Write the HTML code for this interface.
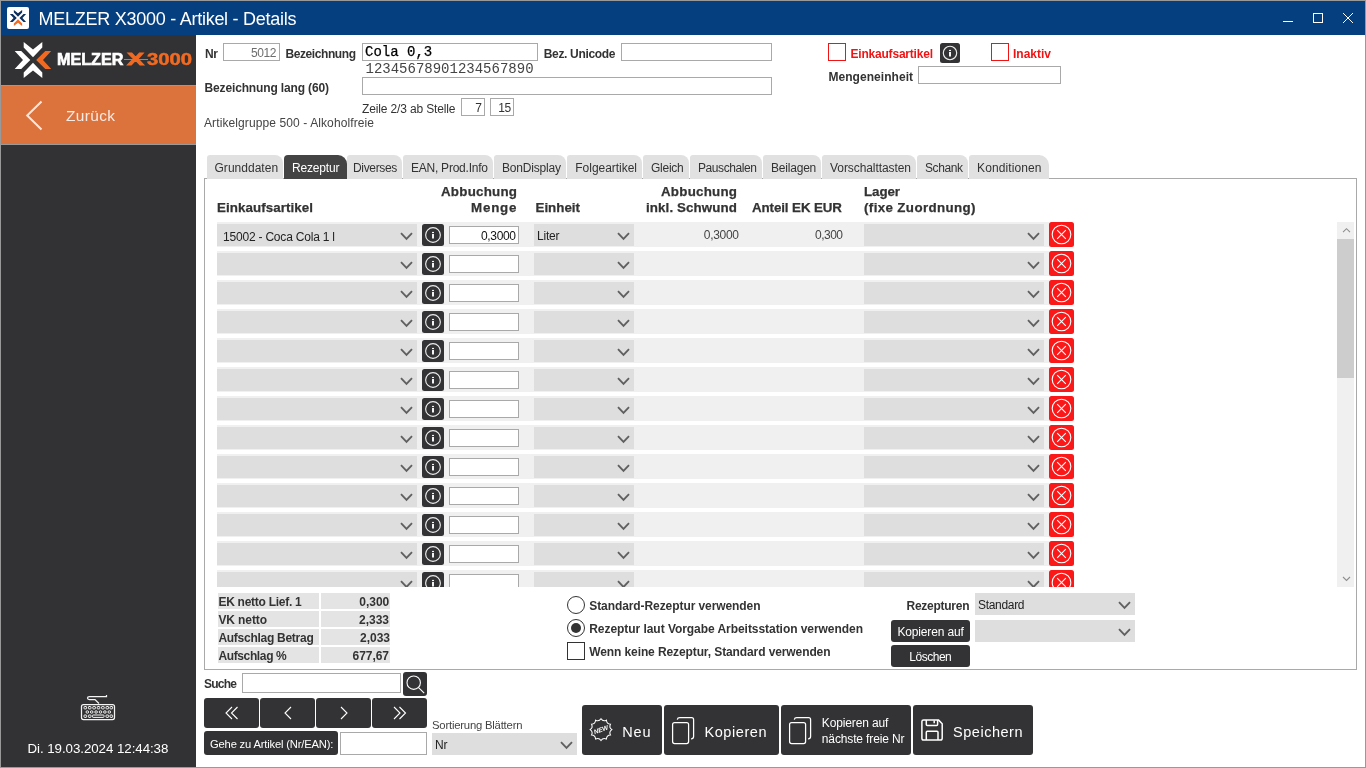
<!DOCTYPE html>
<html lang="de"><head><meta charset="utf-8"><title>MELZER X3000 - Artikel - Details</title>
<style>
html,body{margin:0;padding:0}
body{width:1366px;height:768px;position:relative;overflow:hidden;background:#fff;font-family:"Liberation Sans",sans-serif;}
#w{position:absolute;left:0;top:0;width:1366px;height:768px;box-sizing:border-box;border:1px solid #999;overflow:hidden}
#c{position:absolute;left:-1px;top:-1px;width:1366px;height:768px;will-change:transform}
#c div,#c svg,#c span{position:absolute}
.t{white-space:pre;line-height:20px;height:20px}
.titlebar{left:1px;top:1px;width:1364px;height:34px;background:#053f7f}
.sidebar{left:1px;top:35px;width:195px;height:732px;background:#323234}
svg{overflow:visible}
</style></head>
<body><div id="w"><div id="c">
<div class="titlebar"></div>
<svg class="abs" style="left:7px;top:7px" width="22" height="22" viewBox="0 0 22 22"><rect x="0" y="0" width="22" height="22" rx="2" fill="#fff"/>
<g transform="translate(11 11) scale(0.445) translate(-33 -60)"><g fill="#0b2f5e">
<polygon points="23.7,41.9 33,49.5 42.3,41.9 42.3,47.5 33,57.2 23.7,47.5"/>
<polygon points="14.7,51 21.2,51 30.3,60 21.2,68.9 14.7,68.9 23,60"/>
<polygon points="51.2,51 45.3,51 36.2,60 45.3,68.9 51.2,68.9 43,60"/></g>
<polygon points="23.7,78.1 33,70.4 42.3,78.1 42.3,72.6 33,62.7 23.7,72.6" fill="#f26a21"/></g></svg>
<span class="t" style="top:8.76px;font-size:18px;color:#fff;letter-spacing:-0.264px;left:38.60px;">MELZER X3000 - Artikel - Details</span>
<svg class="abs" style="left:1270px;top:1px" width="95" height="34" viewBox="0 0 95 34"><g stroke="#fff" stroke-width="1" fill="none">
<path d="M13 20.5 H23"/><rect x="43.5" y="12.5" width="9" height="9"/><path d="M73 12 L83 22 M83 12 L73 22"/></g></svg>
<div class="sidebar"></div>
<svg class="abs" style="left:0px;top:0px" width="60" height="90" viewBox="0 0 60 90">
<g fill="#fff">
<polygon points="23.7,41.9 33,49.5 42.3,41.9 42.3,47.5 33,57.2 23.7,47.5"/>
<polygon points="23.7,78.1 33,70.4 42.3,78.1 42.3,72.6 33,62.7 23.7,72.6"/>
<polygon points="14.7,51 21.2,51 30.3,60 21.2,68.9 14.7,68.9 23,60"/>
</g>
<polygon points="51.2,51 45.3,51 36.2,60 45.3,68.9 51.2,68.9 43,60" fill="#f26a21"/>
</svg>
<span class="t" style="left:57.00px;top:47.21px;font-size:17.3px;line-height:24px;height:24px;color:#fff;font-weight:bold;transform-origin:0 50%;transform:scaleX(0.9337);-webkit-text-stroke:0.7px #fff;">MELZER</span>
<span class="t" style="left:127.30px;top:47.71px;font-size:17px;line-height:24px;height:24px;color:#f26a21;font-weight:bold;transform-origin:0 50%;transform:scaleX(1.5169);-webkit-text-stroke:0.8px #f26a21;">X</span>
<span class="t" style="left:146.60px;top:47.68px;font-size:16.8px;line-height:24px;height:24px;color:#f26a21;font-weight:bold;transform-origin:0 50%;transform:scaleX(1.2094);-webkit-text-stroke:0.5px #f26a21;">3000</span>
<div class="abs" style="left:124px;top:59px;width:23.5px;height:1px;background:#f26a21;"></div>
<div class="abs" style="left:1px;top:85px;width:195px;height:60px;background:#dc733d;border-top:1px solid #9a9a9a;border-bottom:1px solid #9a9a9a;box-sizing:border-box;"></div>
<svg class="abs" style="left:24px;top:99px" width="22" height="34" viewBox="0 0 22 34"><path d="M17.5 2.5 L3.2 16.5 L17.5 30.5" fill="none" stroke="#f8e8df" stroke-width="2"/></svg>
<span class="t" style="top:105.86px;font-size:15.4px;color:#f8ebe4;letter-spacing:0.387px;left:66.00px;">Zurück</span>
<svg class="abs" style="left:80px;top:694px" width="36" height="27" viewBox="0 0 36 27"><g fill="none" stroke="#f4f4f4" stroke-width="1.25">
<rect x="1.5" y="10.5" width="33" height="15" rx="2"/>
<path d="M26.5 1 V2.5 H9.5 Q7.5 2.5 7.5 4 Q7.5 5.5 9.5 5.5 H15 L19 9.5"/>
<g stroke-width="1">
<rect x="4" y="12.5" width="2.6" height="2.4" rx="0.6"/><rect x="8.4" y="12.5" width="2.6" height="2.4" rx="0.6"/><rect x="12.8" y="12.5" width="2.6" height="2.4" rx="0.6"/><rect x="17.2" y="12.5" width="2.6" height="2.4" rx="0.6"/><rect x="21.6" y="12.5" width="2.6" height="2.4" rx="0.6"/><rect x="26" y="12.5" width="2.6" height="2.4" rx="0.6"/><rect x="30" y="12.5" width="2.6" height="2.4" rx="0.6"/>
<rect x="6" y="16.8" width="2.6" height="2.4" rx="1.2"/><rect x="10.4" y="16.8" width="2.6" height="2.4" rx="1.2"/><rect x="14.8" y="16.8" width="2.6" height="2.4" rx="1.2"/><rect x="19.2" y="16.8" width="2.6" height="2.4" rx="1.2"/><rect x="23.6" y="16.8" width="2.6" height="2.4" rx="1.2"/><rect x="28" y="16.8" width="2.6" height="2.4" rx="1.2"/>
<rect x="4" y="21" width="2.6" height="2.4" rx="0.6"/><rect x="8.4" y="21" width="2.6" height="2.4" rx="0.6"/><rect x="12.5" y="21" width="11.5" height="2.4" rx="0.6"/><rect x="26" y="21" width="2.6" height="2.4" rx="0.6"/><rect x="30" y="21" width="2.6" height="2.4" rx="0.6"/>
</g></g></svg>
<span class="t" style="top:738.88px;font-size:13.33px;color:#fff;letter-spacing:-0.064px;left:27.50px;">Di. 19.03.2024 12:44:38</span>
<span class="t" style="top:44.34px;font-size:12px;color:#333;letter-spacing:-0.336px;font-weight:bold;left:205.00px;">Nr</span>
<div class="abs" style="left:223px;top:43px;width:57px;height:18px;background:#fff;border:1px solid #a9a9a9;box-sizing:border-box;"></div>
<span class="t" style="top:42.84px;font-size:12px;color:#6d6d6d;letter-spacing:-0.398px;left:251.00px;">5012</span>
<span class="t" style="top:44.34px;font-size:12px;color:#333;letter-spacing:-0.417px;font-weight:bold;left:285.50px;">Bezeichnung</span>
<div class="abs" style="left:362px;top:43px;width:176px;height:18px;background:#fff;border:1px solid #a9a9a9;box-sizing:border-box;"></div>
<span class="t" style="top:42.35px;font-size:14px;color:#000;font-family:'Liberation Mono',monospace;left:365.00px;-webkit-text-stroke:0.25px #000;">Cola 0,3</span>
<span class="t" style="top:59.35px;font-size:14px;color:#444;font-family:'Liberation Mono',monospace;left:365.50px;">12345678901234567890</span>
<span class="t" style="top:44.34px;font-size:12px;color:#333;letter-spacing:-0.327px;font-weight:bold;left:543.75px;">Bez. Unicode</span>
<div class="abs" style="left:621px;top:43px;width:151px;height:18px;background:#fff;border:1px solid #a9a9a9;box-sizing:border-box;"></div>
<span class="t" style="top:77.84px;font-size:12px;color:#333;letter-spacing:-0.142px;font-weight:bold;left:204.50px;">Bezeichnung lang (60)</span>
<div class="abs" style="left:362px;top:77px;width:410px;height:18px;background:#fff;border:1px solid #a9a9a9;box-sizing:border-box;"></div>
<span class="t" style="top:99.14px;font-size:12px;color:#333;letter-spacing:-0.142px;left:362.00px;">Zeile 2/3 ab Stelle</span>
<div class="abs" style="left:461px;top:98px;width:24px;height:18px;background:#fff;border:1px solid #a9a9a9;box-sizing:border-box;"></div>
<span class="t" style="top:98.34px;font-size:12px;color:#333;left:475.20px;">7</span>
<div class="abs" style="left:490px;top:98px;width:24px;height:18px;background:#fff;border:1px solid #a9a9a9;box-sizing:border-box;"></div>
<span class="t" style="top:98.34px;font-size:12px;color:#333;letter-spacing:-0.348px;left:498.20px;">15</span>
<span class="t" style="top:112.84px;font-size:12px;color:#444;letter-spacing:0.104px;left:204.00px;">Artikelgruppe 500 - Alkoholfreie</span>
<div class="abs" style="left:828px;top:43px;width:18px;height:18px;background:#fff;border:1px solid #f01414;box-sizing:border-box;"></div>
<span class="t" style="top:43.84px;font-size:12px;color:#f01414;letter-spacing:-0.205px;font-weight:bold;left:850.50px;">Einkaufsartikel</span>
<svg class="abs" style="left:940px;top:43px" width="20" height="20" viewBox="0 0 20 20"><rect width="20" height="20" rx="2.5" fill="#333335"/><circle cx="10.0" cy="10.0" r="6.70" fill="none" stroke="#ededed" stroke-width="1.15"/><rect x="9.0" y="9.0" width="2" height="4.5" fill="#f4f4f4"/><rect x="9.0" y="6.9" width="2" height="1.2" fill="#f4f4f4"/></svg>
<div class="abs" style="left:991px;top:43px;width:18px;height:18px;background:#fff;border:1px solid #f01414;box-sizing:border-box;"></div>
<span class="t" style="top:43.84px;font-size:12px;color:#f01414;letter-spacing:-0.003px;font-weight:bold;left:1013.00px;">Inaktiv</span>
<span class="t" style="top:66.84px;font-size:12px;color:#333;letter-spacing:0.041px;font-weight:bold;left:828.50px;">Mengeneinheit</span>
<div class="abs" style="left:918px;top:66px;width:143px;height:18px;background:#fff;border:1px solid #a9a9a9;box-sizing:border-box;"></div>
<div class="abs" style="left:204px;top:178px;width:1153px;height:492px;border:1px solid #a9a9a9;box-sizing:border-box;background:#fff;"></div>
<div class="abs" style="left:207px;top:155px;width:76px;height:24px;background:#e1e1e1;border-radius:3px 8px 0 0;"></div>
<span class="t" style="top:157.54px;font-size:12px;color:#333;letter-spacing:0.024px;left:214.50px;">Grunddaten</span>
<div class="abs" style="left:347px;top:155px;width:54.80000000000001px;height:24px;background:#e1e1e1;border-radius:3px 8px 0 0;"></div>
<span class="t" style="top:157.54px;font-size:12px;color:#333;letter-spacing:-0.339px;left:353.00px;">Diverses</span>
<div class="abs" style="left:403px;top:155px;width:90px;height:24px;background:#e1e1e1;border-radius:3px 8px 0 0;"></div>
<span class="t" style="top:157.54px;font-size:12px;color:#333;letter-spacing:-0.226px;left:410.90px;">EAN, Prod.Info</span>
<div class="abs" style="left:494px;top:155px;width:71.79999999999995px;height:24px;background:#e1e1e1;border-radius:3px 8px 0 0;"></div>
<span class="t" style="top:157.54px;font-size:12px;color:#333;letter-spacing:-0.189px;left:502.00px;">BonDisplay</span>
<div class="abs" style="left:567px;top:155px;width:75px;height:24px;background:#e1e1e1;border-radius:3px 8px 0 0;"></div>
<span class="t" style="top:157.54px;font-size:12px;color:#333;letter-spacing:-0.030px;left:575.30px;">Folgeartikel</span>
<div class="abs" style="left:643px;top:155px;width:46px;height:24px;background:#e1e1e1;border-radius:3px 8px 0 0;"></div>
<span class="t" style="top:157.54px;font-size:12px;color:#333;letter-spacing:-0.243px;left:651.00px;">Gleich</span>
<div class="abs" style="left:690px;top:155px;width:71.79999999999995px;height:24px;background:#e1e1e1;border-radius:3px 8px 0 0;"></div>
<span class="t" style="top:157.54px;font-size:12px;color:#333;letter-spacing:-0.413px;left:698.00px;">Pauschalen</span>
<div class="abs" style="left:763px;top:155px;width:57.60000000000002px;height:24px;background:#e1e1e1;border-radius:3px 8px 0 0;"></div>
<span class="t" style="top:157.54px;font-size:12px;color:#333;letter-spacing:-0.201px;left:771.00px;">Beilagen</span>
<div class="abs" style="left:822px;top:155px;width:94px;height:24px;background:#e1e1e1;border-radius:3px 8px 0 0;"></div>
<span class="t" style="top:157.54px;font-size:12px;color:#333;letter-spacing:-0.089px;left:830.10px;">Vorschalttasten</span>
<div class="abs" style="left:917px;top:155px;width:50.700000000000045px;height:24px;background:#e1e1e1;border-radius:3px 8px 0 0;"></div>
<span class="t" style="top:157.54px;font-size:12px;color:#333;letter-spacing:-0.385px;left:925.00px;">Schank</span>
<div class="abs" style="left:969px;top:155px;width:79.79999999999995px;height:24px;background:#e1e1e1;border-radius:3px 10px 0 0;"></div>
<span class="t" style="top:157.54px;font-size:12px;color:#333;letter-spacing:0.091px;left:977.10px;">Konditionen</span>
<div class="abs" style="left:284px;top:155px;width:62.80000000000001px;height:24px;background:#444445;border-radius:4px 9px 0 0;"></div>
<span class="t" style="top:157.54px;font-size:12px;color:#fff;letter-spacing:-0.170px;left:292.00px;">Rezeptur</span>
<span class="t" style="top:197.68px;font-size:13.33px;color:#333;letter-spacing:0.083px;font-weight:bold;left:217.00px;-webkit-text-stroke:0.25px #333;">Einkaufsartikel</span>
<span class="t" style="top:181.58px;font-size:13.33px;color:#333;letter-spacing:0.245px;font-weight:bold;left:441.00px;-webkit-text-stroke:0.25px #333;">Abbuchung</span>
<span class="t" style="top:197.68px;font-size:13.33px;color:#333;letter-spacing:0.821px;font-weight:bold;left:471.00px;-webkit-text-stroke:0.25px #333;">Menge</span>
<span class="t" style="top:197.68px;font-size:13.33px;color:#333;letter-spacing:0.011px;font-weight:bold;left:535.50px;-webkit-text-stroke:0.25px #333;">Einheit</span>
<span class="t" style="top:181.58px;font-size:13.33px;color:#333;letter-spacing:0.245px;font-weight:bold;left:661.00px;-webkit-text-stroke:0.25px #333;">Abbuchung</span>
<span class="t" style="top:197.68px;font-size:13.33px;color:#333;letter-spacing:0.116px;font-weight:bold;left:646.00px;-webkit-text-stroke:0.25px #333;">inkl. Schwund</span>
<span class="t" style="top:197.68px;font-size:13.33px;color:#333;letter-spacing:-0.091px;font-weight:bold;left:752.00px;-webkit-text-stroke:0.25px #333;">Anteil EK EUR</span>
<span class="t" style="top:181.58px;font-size:13.33px;color:#333;letter-spacing:-0.075px;font-weight:bold;left:864.00px;-webkit-text-stroke:0.25px #333;">Lager</span>
<span class="t" style="top:197.68px;font-size:13.33px;color:#333;letter-spacing:0.375px;font-weight:bold;left:864.00px;-webkit-text-stroke:0.25px #333;">(fixe Zuordnung)</span>
<div class="abs" style="left:205px;top:222px;width:1132px;height:365px;overflow:hidden">
<div class="abs" style="left:12px;top:0px;width:832px;height:25px;background:#f0f0f0;"></div>
<div class="abs" style="left:12px;top:2px;width:200px;height:22px;background:#dedede;"></div>
<svg class="abs" style="left:195px;top:10px" width="13" height="9" viewBox="0 0 13 9"><path d="M1 1.2 L6.5 7 L12 1.2" fill="none" stroke="#606060" stroke-width="1.85"/></svg>
<svg class="abs" style="left:217px;top:2px" width="22" height="22" viewBox="0 0 22 22"><rect width="22" height="22" rx="2.5" fill="#333335"/><circle cx="11.0" cy="11.0" r="7.37" fill="none" stroke="#ededed" stroke-width="1.15"/><rect x="10.0" y="10.0" width="2" height="4.5" fill="#f4f4f4"/><rect x="10.0" y="7.9" width="2" height="1.2" fill="#f4f4f4"/></svg>
<div class="abs" style="left:244px;top:4px;width:70px;height:18px;background:#fff;border:1px solid #a9a9a9;box-sizing:border-box;"></div>
<div class="abs" style="left:329px;top:2px;width:100px;height:22px;background:#dedede;"></div>
<svg class="abs" style="left:412px;top:10px" width="13" height="9" viewBox="0 0 13 9"><path d="M1 1.2 L6.5 7 L12 1.2" fill="none" stroke="#606060" stroke-width="1.85"/></svg>
<div class="abs" style="left:659px;top:2px;width:180px;height:22px;background:#dedede;"></div>
<svg class="abs" style="left:822px;top:10px" width="13" height="9" viewBox="0 0 13 9"><path d="M1 1.2 L6.5 7 L12 1.2" fill="none" stroke="#606060" stroke-width="1.85"/></svg>
<svg class="abs" style="left:844px;top:0px" width="25" height="25" viewBox="0 0 25 25"><rect width="25" height="25" rx="2.5" fill="#fb1818"/><circle cx="12.5" cy="12.5" r="9.3" fill="none" stroke="#fff" stroke-width="1.1"/><path d="M8.2 8.2 L16.8 16.8 M16.8 8.2 L8.2 16.8" stroke="#fff" stroke-width="1.1"/></svg>
<div class="abs" style="left:12px;top:29px;width:832px;height:25px;background:#f0f0f0;"></div>
<div class="abs" style="left:12px;top:31px;width:200px;height:22px;background:#dedede;"></div>
<svg class="abs" style="left:195px;top:39px" width="13" height="9" viewBox="0 0 13 9"><path d="M1 1.2 L6.5 7 L12 1.2" fill="none" stroke="#606060" stroke-width="1.85"/></svg>
<svg class="abs" style="left:217px;top:31px" width="22" height="22" viewBox="0 0 22 22"><rect width="22" height="22" rx="2.5" fill="#333335"/><circle cx="11.0" cy="11.0" r="7.37" fill="none" stroke="#ededed" stroke-width="1.15"/><rect x="10.0" y="10.0" width="2" height="4.5" fill="#f4f4f4"/><rect x="10.0" y="7.9" width="2" height="1.2" fill="#f4f4f4"/></svg>
<div class="abs" style="left:244px;top:33px;width:70px;height:18px;background:#fff;border:1px solid #a9a9a9;box-sizing:border-box;"></div>
<div class="abs" style="left:329px;top:31px;width:100px;height:22px;background:#dedede;"></div>
<svg class="abs" style="left:412px;top:39px" width="13" height="9" viewBox="0 0 13 9"><path d="M1 1.2 L6.5 7 L12 1.2" fill="none" stroke="#606060" stroke-width="1.85"/></svg>
<div class="abs" style="left:659px;top:31px;width:180px;height:22px;background:#dedede;"></div>
<svg class="abs" style="left:822px;top:39px" width="13" height="9" viewBox="0 0 13 9"><path d="M1 1.2 L6.5 7 L12 1.2" fill="none" stroke="#606060" stroke-width="1.85"/></svg>
<svg class="abs" style="left:844px;top:29px" width="25" height="25" viewBox="0 0 25 25"><rect width="25" height="25" rx="2.5" fill="#fb1818"/><circle cx="12.5" cy="12.5" r="9.3" fill="none" stroke="#fff" stroke-width="1.1"/><path d="M8.2 8.2 L16.8 16.8 M16.8 8.2 L8.2 16.8" stroke="#fff" stroke-width="1.1"/></svg>
<div class="abs" style="left:12px;top:58px;width:832px;height:25px;background:#f0f0f0;"></div>
<div class="abs" style="left:12px;top:60px;width:200px;height:22px;background:#dedede;"></div>
<svg class="abs" style="left:195px;top:68px" width="13" height="9" viewBox="0 0 13 9"><path d="M1 1.2 L6.5 7 L12 1.2" fill="none" stroke="#606060" stroke-width="1.85"/></svg>
<svg class="abs" style="left:217px;top:60px" width="22" height="22" viewBox="0 0 22 22"><rect width="22" height="22" rx="2.5" fill="#333335"/><circle cx="11.0" cy="11.0" r="7.37" fill="none" stroke="#ededed" stroke-width="1.15"/><rect x="10.0" y="10.0" width="2" height="4.5" fill="#f4f4f4"/><rect x="10.0" y="7.9" width="2" height="1.2" fill="#f4f4f4"/></svg>
<div class="abs" style="left:244px;top:62px;width:70px;height:18px;background:#fff;border:1px solid #a9a9a9;box-sizing:border-box;"></div>
<div class="abs" style="left:329px;top:60px;width:100px;height:22px;background:#dedede;"></div>
<svg class="abs" style="left:412px;top:68px" width="13" height="9" viewBox="0 0 13 9"><path d="M1 1.2 L6.5 7 L12 1.2" fill="none" stroke="#606060" stroke-width="1.85"/></svg>
<div class="abs" style="left:659px;top:60px;width:180px;height:22px;background:#dedede;"></div>
<svg class="abs" style="left:822px;top:68px" width="13" height="9" viewBox="0 0 13 9"><path d="M1 1.2 L6.5 7 L12 1.2" fill="none" stroke="#606060" stroke-width="1.85"/></svg>
<svg class="abs" style="left:844px;top:58px" width="25" height="25" viewBox="0 0 25 25"><rect width="25" height="25" rx="2.5" fill="#fb1818"/><circle cx="12.5" cy="12.5" r="9.3" fill="none" stroke="#fff" stroke-width="1.1"/><path d="M8.2 8.2 L16.8 16.8 M16.8 8.2 L8.2 16.8" stroke="#fff" stroke-width="1.1"/></svg>
<div class="abs" style="left:12px;top:87px;width:832px;height:25px;background:#f0f0f0;"></div>
<div class="abs" style="left:12px;top:89px;width:200px;height:22px;background:#dedede;"></div>
<svg class="abs" style="left:195px;top:97px" width="13" height="9" viewBox="0 0 13 9"><path d="M1 1.2 L6.5 7 L12 1.2" fill="none" stroke="#606060" stroke-width="1.85"/></svg>
<svg class="abs" style="left:217px;top:89px" width="22" height="22" viewBox="0 0 22 22"><rect width="22" height="22" rx="2.5" fill="#333335"/><circle cx="11.0" cy="11.0" r="7.37" fill="none" stroke="#ededed" stroke-width="1.15"/><rect x="10.0" y="10.0" width="2" height="4.5" fill="#f4f4f4"/><rect x="10.0" y="7.9" width="2" height="1.2" fill="#f4f4f4"/></svg>
<div class="abs" style="left:244px;top:91px;width:70px;height:18px;background:#fff;border:1px solid #a9a9a9;box-sizing:border-box;"></div>
<div class="abs" style="left:329px;top:89px;width:100px;height:22px;background:#dedede;"></div>
<svg class="abs" style="left:412px;top:97px" width="13" height="9" viewBox="0 0 13 9"><path d="M1 1.2 L6.5 7 L12 1.2" fill="none" stroke="#606060" stroke-width="1.85"/></svg>
<div class="abs" style="left:659px;top:89px;width:180px;height:22px;background:#dedede;"></div>
<svg class="abs" style="left:822px;top:97px" width="13" height="9" viewBox="0 0 13 9"><path d="M1 1.2 L6.5 7 L12 1.2" fill="none" stroke="#606060" stroke-width="1.85"/></svg>
<svg class="abs" style="left:844px;top:87px" width="25" height="25" viewBox="0 0 25 25"><rect width="25" height="25" rx="2.5" fill="#fb1818"/><circle cx="12.5" cy="12.5" r="9.3" fill="none" stroke="#fff" stroke-width="1.1"/><path d="M8.2 8.2 L16.8 16.8 M16.8 8.2 L8.2 16.8" stroke="#fff" stroke-width="1.1"/></svg>
<div class="abs" style="left:12px;top:116px;width:832px;height:25px;background:#f0f0f0;"></div>
<div class="abs" style="left:12px;top:118px;width:200px;height:22px;background:#dedede;"></div>
<svg class="abs" style="left:195px;top:126px" width="13" height="9" viewBox="0 0 13 9"><path d="M1 1.2 L6.5 7 L12 1.2" fill="none" stroke="#606060" stroke-width="1.85"/></svg>
<svg class="abs" style="left:217px;top:118px" width="22" height="22" viewBox="0 0 22 22"><rect width="22" height="22" rx="2.5" fill="#333335"/><circle cx="11.0" cy="11.0" r="7.37" fill="none" stroke="#ededed" stroke-width="1.15"/><rect x="10.0" y="10.0" width="2" height="4.5" fill="#f4f4f4"/><rect x="10.0" y="7.9" width="2" height="1.2" fill="#f4f4f4"/></svg>
<div class="abs" style="left:244px;top:120px;width:70px;height:18px;background:#fff;border:1px solid #a9a9a9;box-sizing:border-box;"></div>
<div class="abs" style="left:329px;top:118px;width:100px;height:22px;background:#dedede;"></div>
<svg class="abs" style="left:412px;top:126px" width="13" height="9" viewBox="0 0 13 9"><path d="M1 1.2 L6.5 7 L12 1.2" fill="none" stroke="#606060" stroke-width="1.85"/></svg>
<div class="abs" style="left:659px;top:118px;width:180px;height:22px;background:#dedede;"></div>
<svg class="abs" style="left:822px;top:126px" width="13" height="9" viewBox="0 0 13 9"><path d="M1 1.2 L6.5 7 L12 1.2" fill="none" stroke="#606060" stroke-width="1.85"/></svg>
<svg class="abs" style="left:844px;top:116px" width="25" height="25" viewBox="0 0 25 25"><rect width="25" height="25" rx="2.5" fill="#fb1818"/><circle cx="12.5" cy="12.5" r="9.3" fill="none" stroke="#fff" stroke-width="1.1"/><path d="M8.2 8.2 L16.8 16.8 M16.8 8.2 L8.2 16.8" stroke="#fff" stroke-width="1.1"/></svg>
<div class="abs" style="left:12px;top:145px;width:832px;height:25px;background:#f0f0f0;"></div>
<div class="abs" style="left:12px;top:147px;width:200px;height:22px;background:#dedede;"></div>
<svg class="abs" style="left:195px;top:155px" width="13" height="9" viewBox="0 0 13 9"><path d="M1 1.2 L6.5 7 L12 1.2" fill="none" stroke="#606060" stroke-width="1.85"/></svg>
<svg class="abs" style="left:217px;top:147px" width="22" height="22" viewBox="0 0 22 22"><rect width="22" height="22" rx="2.5" fill="#333335"/><circle cx="11.0" cy="11.0" r="7.37" fill="none" stroke="#ededed" stroke-width="1.15"/><rect x="10.0" y="10.0" width="2" height="4.5" fill="#f4f4f4"/><rect x="10.0" y="7.9" width="2" height="1.2" fill="#f4f4f4"/></svg>
<div class="abs" style="left:244px;top:149px;width:70px;height:18px;background:#fff;border:1px solid #a9a9a9;box-sizing:border-box;"></div>
<div class="abs" style="left:329px;top:147px;width:100px;height:22px;background:#dedede;"></div>
<svg class="abs" style="left:412px;top:155px" width="13" height="9" viewBox="0 0 13 9"><path d="M1 1.2 L6.5 7 L12 1.2" fill="none" stroke="#606060" stroke-width="1.85"/></svg>
<div class="abs" style="left:659px;top:147px;width:180px;height:22px;background:#dedede;"></div>
<svg class="abs" style="left:822px;top:155px" width="13" height="9" viewBox="0 0 13 9"><path d="M1 1.2 L6.5 7 L12 1.2" fill="none" stroke="#606060" stroke-width="1.85"/></svg>
<svg class="abs" style="left:844px;top:145px" width="25" height="25" viewBox="0 0 25 25"><rect width="25" height="25" rx="2.5" fill="#fb1818"/><circle cx="12.5" cy="12.5" r="9.3" fill="none" stroke="#fff" stroke-width="1.1"/><path d="M8.2 8.2 L16.8 16.8 M16.8 8.2 L8.2 16.8" stroke="#fff" stroke-width="1.1"/></svg>
<div class="abs" style="left:12px;top:174px;width:832px;height:25px;background:#f0f0f0;"></div>
<div class="abs" style="left:12px;top:176px;width:200px;height:22px;background:#dedede;"></div>
<svg class="abs" style="left:195px;top:184px" width="13" height="9" viewBox="0 0 13 9"><path d="M1 1.2 L6.5 7 L12 1.2" fill="none" stroke="#606060" stroke-width="1.85"/></svg>
<svg class="abs" style="left:217px;top:176px" width="22" height="22" viewBox="0 0 22 22"><rect width="22" height="22" rx="2.5" fill="#333335"/><circle cx="11.0" cy="11.0" r="7.37" fill="none" stroke="#ededed" stroke-width="1.15"/><rect x="10.0" y="10.0" width="2" height="4.5" fill="#f4f4f4"/><rect x="10.0" y="7.9" width="2" height="1.2" fill="#f4f4f4"/></svg>
<div class="abs" style="left:244px;top:178px;width:70px;height:18px;background:#fff;border:1px solid #a9a9a9;box-sizing:border-box;"></div>
<div class="abs" style="left:329px;top:176px;width:100px;height:22px;background:#dedede;"></div>
<svg class="abs" style="left:412px;top:184px" width="13" height="9" viewBox="0 0 13 9"><path d="M1 1.2 L6.5 7 L12 1.2" fill="none" stroke="#606060" stroke-width="1.85"/></svg>
<div class="abs" style="left:659px;top:176px;width:180px;height:22px;background:#dedede;"></div>
<svg class="abs" style="left:822px;top:184px" width="13" height="9" viewBox="0 0 13 9"><path d="M1 1.2 L6.5 7 L12 1.2" fill="none" stroke="#606060" stroke-width="1.85"/></svg>
<svg class="abs" style="left:844px;top:174px" width="25" height="25" viewBox="0 0 25 25"><rect width="25" height="25" rx="2.5" fill="#fb1818"/><circle cx="12.5" cy="12.5" r="9.3" fill="none" stroke="#fff" stroke-width="1.1"/><path d="M8.2 8.2 L16.8 16.8 M16.8 8.2 L8.2 16.8" stroke="#fff" stroke-width="1.1"/></svg>
<div class="abs" style="left:12px;top:203px;width:832px;height:25px;background:#f0f0f0;"></div>
<div class="abs" style="left:12px;top:205px;width:200px;height:22px;background:#dedede;"></div>
<svg class="abs" style="left:195px;top:213px" width="13" height="9" viewBox="0 0 13 9"><path d="M1 1.2 L6.5 7 L12 1.2" fill="none" stroke="#606060" stroke-width="1.85"/></svg>
<svg class="abs" style="left:217px;top:205px" width="22" height="22" viewBox="0 0 22 22"><rect width="22" height="22" rx="2.5" fill="#333335"/><circle cx="11.0" cy="11.0" r="7.37" fill="none" stroke="#ededed" stroke-width="1.15"/><rect x="10.0" y="10.0" width="2" height="4.5" fill="#f4f4f4"/><rect x="10.0" y="7.9" width="2" height="1.2" fill="#f4f4f4"/></svg>
<div class="abs" style="left:244px;top:207px;width:70px;height:18px;background:#fff;border:1px solid #a9a9a9;box-sizing:border-box;"></div>
<div class="abs" style="left:329px;top:205px;width:100px;height:22px;background:#dedede;"></div>
<svg class="abs" style="left:412px;top:213px" width="13" height="9" viewBox="0 0 13 9"><path d="M1 1.2 L6.5 7 L12 1.2" fill="none" stroke="#606060" stroke-width="1.85"/></svg>
<div class="abs" style="left:659px;top:205px;width:180px;height:22px;background:#dedede;"></div>
<svg class="abs" style="left:822px;top:213px" width="13" height="9" viewBox="0 0 13 9"><path d="M1 1.2 L6.5 7 L12 1.2" fill="none" stroke="#606060" stroke-width="1.85"/></svg>
<svg class="abs" style="left:844px;top:203px" width="25" height="25" viewBox="0 0 25 25"><rect width="25" height="25" rx="2.5" fill="#fb1818"/><circle cx="12.5" cy="12.5" r="9.3" fill="none" stroke="#fff" stroke-width="1.1"/><path d="M8.2 8.2 L16.8 16.8 M16.8 8.2 L8.2 16.8" stroke="#fff" stroke-width="1.1"/></svg>
<div class="abs" style="left:12px;top:232px;width:832px;height:25px;background:#f0f0f0;"></div>
<div class="abs" style="left:12px;top:234px;width:200px;height:22px;background:#dedede;"></div>
<svg class="abs" style="left:195px;top:242px" width="13" height="9" viewBox="0 0 13 9"><path d="M1 1.2 L6.5 7 L12 1.2" fill="none" stroke="#606060" stroke-width="1.85"/></svg>
<svg class="abs" style="left:217px;top:234px" width="22" height="22" viewBox="0 0 22 22"><rect width="22" height="22" rx="2.5" fill="#333335"/><circle cx="11.0" cy="11.0" r="7.37" fill="none" stroke="#ededed" stroke-width="1.15"/><rect x="10.0" y="10.0" width="2" height="4.5" fill="#f4f4f4"/><rect x="10.0" y="7.9" width="2" height="1.2" fill="#f4f4f4"/></svg>
<div class="abs" style="left:244px;top:236px;width:70px;height:18px;background:#fff;border:1px solid #a9a9a9;box-sizing:border-box;"></div>
<div class="abs" style="left:329px;top:234px;width:100px;height:22px;background:#dedede;"></div>
<svg class="abs" style="left:412px;top:242px" width="13" height="9" viewBox="0 0 13 9"><path d="M1 1.2 L6.5 7 L12 1.2" fill="none" stroke="#606060" stroke-width="1.85"/></svg>
<div class="abs" style="left:659px;top:234px;width:180px;height:22px;background:#dedede;"></div>
<svg class="abs" style="left:822px;top:242px" width="13" height="9" viewBox="0 0 13 9"><path d="M1 1.2 L6.5 7 L12 1.2" fill="none" stroke="#606060" stroke-width="1.85"/></svg>
<svg class="abs" style="left:844px;top:232px" width="25" height="25" viewBox="0 0 25 25"><rect width="25" height="25" rx="2.5" fill="#fb1818"/><circle cx="12.5" cy="12.5" r="9.3" fill="none" stroke="#fff" stroke-width="1.1"/><path d="M8.2 8.2 L16.8 16.8 M16.8 8.2 L8.2 16.8" stroke="#fff" stroke-width="1.1"/></svg>
<div class="abs" style="left:12px;top:261px;width:832px;height:25px;background:#f0f0f0;"></div>
<div class="abs" style="left:12px;top:263px;width:200px;height:22px;background:#dedede;"></div>
<svg class="abs" style="left:195px;top:271px" width="13" height="9" viewBox="0 0 13 9"><path d="M1 1.2 L6.5 7 L12 1.2" fill="none" stroke="#606060" stroke-width="1.85"/></svg>
<svg class="abs" style="left:217px;top:263px" width="22" height="22" viewBox="0 0 22 22"><rect width="22" height="22" rx="2.5" fill="#333335"/><circle cx="11.0" cy="11.0" r="7.37" fill="none" stroke="#ededed" stroke-width="1.15"/><rect x="10.0" y="10.0" width="2" height="4.5" fill="#f4f4f4"/><rect x="10.0" y="7.9" width="2" height="1.2" fill="#f4f4f4"/></svg>
<div class="abs" style="left:244px;top:265px;width:70px;height:18px;background:#fff;border:1px solid #a9a9a9;box-sizing:border-box;"></div>
<div class="abs" style="left:329px;top:263px;width:100px;height:22px;background:#dedede;"></div>
<svg class="abs" style="left:412px;top:271px" width="13" height="9" viewBox="0 0 13 9"><path d="M1 1.2 L6.5 7 L12 1.2" fill="none" stroke="#606060" stroke-width="1.85"/></svg>
<div class="abs" style="left:659px;top:263px;width:180px;height:22px;background:#dedede;"></div>
<svg class="abs" style="left:822px;top:271px" width="13" height="9" viewBox="0 0 13 9"><path d="M1 1.2 L6.5 7 L12 1.2" fill="none" stroke="#606060" stroke-width="1.85"/></svg>
<svg class="abs" style="left:844px;top:261px" width="25" height="25" viewBox="0 0 25 25"><rect width="25" height="25" rx="2.5" fill="#fb1818"/><circle cx="12.5" cy="12.5" r="9.3" fill="none" stroke="#fff" stroke-width="1.1"/><path d="M8.2 8.2 L16.8 16.8 M16.8 8.2 L8.2 16.8" stroke="#fff" stroke-width="1.1"/></svg>
<div class="abs" style="left:12px;top:290px;width:832px;height:25px;background:#f0f0f0;"></div>
<div class="abs" style="left:12px;top:292px;width:200px;height:22px;background:#dedede;"></div>
<svg class="abs" style="left:195px;top:300px" width="13" height="9" viewBox="0 0 13 9"><path d="M1 1.2 L6.5 7 L12 1.2" fill="none" stroke="#606060" stroke-width="1.85"/></svg>
<svg class="abs" style="left:217px;top:292px" width="22" height="22" viewBox="0 0 22 22"><rect width="22" height="22" rx="2.5" fill="#333335"/><circle cx="11.0" cy="11.0" r="7.37" fill="none" stroke="#ededed" stroke-width="1.15"/><rect x="10.0" y="10.0" width="2" height="4.5" fill="#f4f4f4"/><rect x="10.0" y="7.9" width="2" height="1.2" fill="#f4f4f4"/></svg>
<div class="abs" style="left:244px;top:294px;width:70px;height:18px;background:#fff;border:1px solid #a9a9a9;box-sizing:border-box;"></div>
<div class="abs" style="left:329px;top:292px;width:100px;height:22px;background:#dedede;"></div>
<svg class="abs" style="left:412px;top:300px" width="13" height="9" viewBox="0 0 13 9"><path d="M1 1.2 L6.5 7 L12 1.2" fill="none" stroke="#606060" stroke-width="1.85"/></svg>
<div class="abs" style="left:659px;top:292px;width:180px;height:22px;background:#dedede;"></div>
<svg class="abs" style="left:822px;top:300px" width="13" height="9" viewBox="0 0 13 9"><path d="M1 1.2 L6.5 7 L12 1.2" fill="none" stroke="#606060" stroke-width="1.85"/></svg>
<svg class="abs" style="left:844px;top:290px" width="25" height="25" viewBox="0 0 25 25"><rect width="25" height="25" rx="2.5" fill="#fb1818"/><circle cx="12.5" cy="12.5" r="9.3" fill="none" stroke="#fff" stroke-width="1.1"/><path d="M8.2 8.2 L16.8 16.8 M16.8 8.2 L8.2 16.8" stroke="#fff" stroke-width="1.1"/></svg>
<div class="abs" style="left:12px;top:319px;width:832px;height:25px;background:#f0f0f0;"></div>
<div class="abs" style="left:12px;top:321px;width:200px;height:22px;background:#dedede;"></div>
<svg class="abs" style="left:195px;top:329px" width="13" height="9" viewBox="0 0 13 9"><path d="M1 1.2 L6.5 7 L12 1.2" fill="none" stroke="#606060" stroke-width="1.85"/></svg>
<svg class="abs" style="left:217px;top:321px" width="22" height="22" viewBox="0 0 22 22"><rect width="22" height="22" rx="2.5" fill="#333335"/><circle cx="11.0" cy="11.0" r="7.37" fill="none" stroke="#ededed" stroke-width="1.15"/><rect x="10.0" y="10.0" width="2" height="4.5" fill="#f4f4f4"/><rect x="10.0" y="7.9" width="2" height="1.2" fill="#f4f4f4"/></svg>
<div class="abs" style="left:244px;top:323px;width:70px;height:18px;background:#fff;border:1px solid #a9a9a9;box-sizing:border-box;"></div>
<div class="abs" style="left:329px;top:321px;width:100px;height:22px;background:#dedede;"></div>
<svg class="abs" style="left:412px;top:329px" width="13" height="9" viewBox="0 0 13 9"><path d="M1 1.2 L6.5 7 L12 1.2" fill="none" stroke="#606060" stroke-width="1.85"/></svg>
<div class="abs" style="left:659px;top:321px;width:180px;height:22px;background:#dedede;"></div>
<svg class="abs" style="left:822px;top:329px" width="13" height="9" viewBox="0 0 13 9"><path d="M1 1.2 L6.5 7 L12 1.2" fill="none" stroke="#606060" stroke-width="1.85"/></svg>
<svg class="abs" style="left:844px;top:319px" width="25" height="25" viewBox="0 0 25 25"><rect width="25" height="25" rx="2.5" fill="#fb1818"/><circle cx="12.5" cy="12.5" r="9.3" fill="none" stroke="#fff" stroke-width="1.1"/><path d="M8.2 8.2 L16.8 16.8 M16.8 8.2 L8.2 16.8" stroke="#fff" stroke-width="1.1"/></svg>
<div class="abs" style="left:12px;top:348px;width:832px;height:25px;background:#f0f0f0;"></div>
<div class="abs" style="left:12px;top:350px;width:200px;height:22px;background:#dedede;"></div>
<svg class="abs" style="left:195px;top:358px" width="13" height="9" viewBox="0 0 13 9"><path d="M1 1.2 L6.5 7 L12 1.2" fill="none" stroke="#606060" stroke-width="1.85"/></svg>
<svg class="abs" style="left:217px;top:350px" width="22" height="22" viewBox="0 0 22 22"><rect width="22" height="22" rx="2.5" fill="#333335"/><circle cx="11.0" cy="11.0" r="7.37" fill="none" stroke="#ededed" stroke-width="1.15"/><rect x="10.0" y="10.0" width="2" height="4.5" fill="#f4f4f4"/><rect x="10.0" y="7.9" width="2" height="1.2" fill="#f4f4f4"/></svg>
<div class="abs" style="left:244px;top:352px;width:70px;height:18px;background:#fff;border:1px solid #a9a9a9;box-sizing:border-box;"></div>
<div class="abs" style="left:329px;top:350px;width:100px;height:22px;background:#dedede;"></div>
<svg class="abs" style="left:412px;top:358px" width="13" height="9" viewBox="0 0 13 9"><path d="M1 1.2 L6.5 7 L12 1.2" fill="none" stroke="#606060" stroke-width="1.85"/></svg>
<div class="abs" style="left:659px;top:350px;width:180px;height:22px;background:#dedede;"></div>
<svg class="abs" style="left:822px;top:358px" width="13" height="9" viewBox="0 0 13 9"><path d="M1 1.2 L6.5 7 L12 1.2" fill="none" stroke="#606060" stroke-width="1.85"/></svg>
<svg class="abs" style="left:844px;top:348px" width="25" height="25" viewBox="0 0 25 25"><rect width="25" height="25" rx="2.5" fill="#fb1818"/><circle cx="12.5" cy="12.5" r="9.3" fill="none" stroke="#fff" stroke-width="1.1"/><path d="M8.2 8.2 L16.8 16.8 M16.8 8.2 L8.2 16.8" stroke="#fff" stroke-width="1.1"/></svg>
</div>
<span class="t" style="top:226.84px;font-size:12px;color:#222;letter-spacing:-0.203px;left:223.00px;">15002 - Coca Cola 1 l</span>
<span class="t" style="top:225.54px;font-size:12px;color:#111;letter-spacing:-0.341px;left:481.00px;">0,3000</span>
<span class="t" style="top:226.14px;font-size:12px;color:#222;letter-spacing:-0.211px;left:537.00px;">Liter</span>
<span class="t" style="top:224.74px;font-size:12px;color:#444;letter-spacing:-0.291px;left:703.75px;">0,3000</span>
<span class="t" style="top:224.74px;font-size:12px;color:#444;letter-spacing:-0.507px;left:815.00px;">0,300</span>
<div class="abs" style="left:1337px;top:222px;width:17px;height:365px;background:#f0f0f0;"></div>
<div class="abs" style="left:1337px;top:239px;width:17px;height:139px;background:#cdcdcd;"></div>
<svg class="abs" style="left:1342px;top:227px" width="9" height="6" viewBox="0 0 9 6"><path d="M1 5.2 L4.5 1.7 L8 5.2" fill="none" stroke="#8e8e8e" stroke-width="1.1"/></svg>
<svg class="abs" style="left:1342px;top:576px" width="9" height="6" viewBox="0 0 9 6"><path d="M1 1 L4.5 4.5 L8 1" fill="none" stroke="#8e8e8e" stroke-width="1.1"/></svg>
<div class="abs" style="left:218px;top:593px;width:101px;height:16px;background:#e4e4e4;"></div>
<div class="abs" style="left:321px;top:593px;width:69px;height:16px;background:#e4e4e4;"></div>
<span class="t" style="top:591.84px;font-size:12px;color:#333;letter-spacing:-0.266px;font-weight:bold;left:218.40px;">EK netto Lief. 1</span>
<span class="t" style="top:591.84px;font-size:12px;color:#333;letter-spacing:-0.007px;font-weight:bold;left:359.25px;">0,300</span>
<div class="abs" style="left:218px;top:611px;width:101px;height:16px;background:#e4e4e4;"></div>
<div class="abs" style="left:321px;top:611px;width:69px;height:16px;background:#e4e4e4;"></div>
<span class="t" style="top:609.84px;font-size:12px;color:#333;letter-spacing:-0.104px;font-weight:bold;left:218.40px;">VK netto</span>
<span class="t" style="top:609.84px;font-size:12px;color:#333;letter-spacing:-0.007px;font-weight:bold;left:359.00px;">2,333</span>
<div class="abs" style="left:218px;top:629px;width:101px;height:16px;background:#e4e4e4;"></div>
<div class="abs" style="left:321px;top:629px;width:69px;height:16px;background:#e4e4e4;"></div>
<span class="t" style="top:627.84px;font-size:12px;color:#333;letter-spacing:-0.267px;font-weight:bold;left:218.40px;">Aufschlag Betrag</span>
<span class="t" style="top:627.84px;font-size:12px;color:#333;letter-spacing:-0.007px;font-weight:bold;left:360.00px;">2,033</span>
<div class="abs" style="left:218px;top:647px;width:101px;height:16px;background:#e4e4e4;"></div>
<div class="abs" style="left:321px;top:647px;width:69px;height:16px;background:#e4e4e4;"></div>
<span class="t" style="top:645.84px;font-size:12px;color:#333;letter-spacing:-0.366px;font-weight:bold;left:218.40px;">Aufschlag %</span>
<span class="t" style="top:645.84px;font-size:12px;color:#333;letter-spacing:-0.041px;font-weight:bold;left:352.50px;">677,67</span>
<div class="abs" style="left:567px;top:596px;width:18px;height:18px;border:1px solid #333;border-radius:50%;box-sizing:border-box;background:#fff"></div>
<div class="abs" style="left:567px;top:619px;width:18px;height:18px;border:1px solid #333;border-radius:50%;box-sizing:border-box;background:#fff"></div>
<div class="abs" style="left:571px;top:623px;width:10px;height:10px;border-radius:50%;background:#333"></div>
<div class="abs" style="left:567px;top:642px;width:18px;height:18px;background:#fff;border:1px solid #333;box-sizing:border-box;"></div>
<span class="t" style="top:595.84px;font-size:12px;color:#333;letter-spacing:-0.081px;font-weight:bold;left:589.25px;">Standard-Rezeptur verwenden</span>
<span class="t" style="top:618.84px;font-size:12px;color:#333;letter-spacing:-0.051px;font-weight:bold;left:589.25px;">Rezeptur laut Vorgabe Arbeitsstation verwenden</span>
<span class="t" style="top:641.59px;font-size:12px;color:#333;letter-spacing:-0.103px;font-weight:bold;left:589.25px;">Wenn keine Rezeptur, Standard verwenden</span>
<span class="t" style="top:595.84px;font-size:12px;color:#333;letter-spacing:-0.260px;font-weight:bold;left:906.50px;">Rezepturen</span>
<div class="abs" style="left:975px;top:593px;width:160px;height:22px;background:#dedede;"></div>
<svg class="abs" style="left:1118px;top:601px" width="13" height="9" viewBox="0 0 13 9"><path d="M1 1.2 L6.5 7 L12 1.2" fill="none" stroke="#606060" stroke-width="1.85"/></svg>
<span class="t" style="top:595.14px;font-size:12px;color:#222;letter-spacing:-0.315px;left:978.00px;">Standard</span>
<div class="abs" style="left:975px;top:620px;width:160px;height:22px;background:#dedede;"></div>
<svg class="abs" style="left:1118px;top:628px" width="13" height="9" viewBox="0 0 13 9"><path d="M1 1.2 L6.5 7 L12 1.2" fill="none" stroke="#606060" stroke-width="1.85"/></svg>
<div class="abs" style="left:891px;top:620px;width:79px;height:22px;background:#333335;border-radius:3px;"></div>
<span class="t" style="top:621.94px;font-size:12px;color:#fff;letter-spacing:-0.164px;left:897.50px;">Kopieren auf</span>
<div class="abs" style="left:891px;top:645px;width:79px;height:22px;background:#333335;border-radius:3px;"></div>
<span class="t" style="top:647.14px;font-size:12px;color:#fff;letter-spacing:-0.478px;left:909.25px;">Löschen</span>
<span class="t" style="top:674.14px;font-size:12px;color:#333;letter-spacing:-0.753px;font-weight:bold;left:204.00px;">Suche</span>
<div class="abs" style="left:242px;top:673px;width:159px;height:20px;background:#fff;border:1px solid #a9a9a9;box-sizing:border-box;"></div>
<div class="abs" style="left:403px;top:672px;width:24px;height:24px;background:#333335;border-radius:3px;"></div>
<svg class="abs" style="left:403px;top:672px" width="24" height="24" viewBox="0 0 24 24"><circle cx="10.7" cy="10.7" r="6.7" fill="none" stroke="#fff" stroke-width="1.1"/><path d="M15.6 15.6 L21.2 21.2" stroke="#fff" stroke-width="1.1"/></svg>
<div class="abs" style="left:204px;top:698px;width:55px;height:30px;background:#333335;border-radius:3px;"></div>
<div class="abs" style="left:260px;top:698px;width:55px;height:30px;background:#333335;border-radius:3px;"></div>
<div class="abs" style="left:316px;top:698px;width:55px;height:30px;background:#333335;border-radius:3px;"></div>
<div class="abs" style="left:372px;top:698px;width:55px;height:30px;background:#333335;border-radius:3px;"></div>
<svg class="abs" style="left:204px;top:698px" width="55" height="30" viewBox="0 0 55 30"><g fill="none" stroke="#fff" stroke-width="1.1"><path d="M28 9 L22 15 L28 21"/><path d="M33.5 9 L27.5 15 L33.5 21"/></g></svg>
<svg class="abs" style="left:260px;top:698px" width="55" height="30" viewBox="0 0 55 30"><g fill="none" stroke="#fff" stroke-width="1.1"><path d="M31 9 L25 15 L31 21"/></g></svg>
<svg class="abs" style="left:316px;top:698px" width="55" height="30" viewBox="0 0 55 30"><g fill="none" stroke="#fff" stroke-width="1.1"><path d="M25 9 L31 15 L25 21"/></g></svg>
<svg class="abs" style="left:372px;top:698px" width="55" height="30" viewBox="0 0 55 30"><g fill="none" stroke="#fff" stroke-width="1.1"><path d="M22 9 L28 15 L22 21"/><path d="M27.5 9 L33.5 15 L27.5 21"/></g></svg>
<div class="abs" style="left:204px;top:731px;width:134px;height:24px;background:#333335;border-radius:3px;"></div>
<span class="t" style="top:734.12px;font-size:11.2px;color:#fff;letter-spacing:-0.171px;left:210.00px;">Gehe zu Artikel (Nr/EAN):</span>
<div class="abs" style="left:340px;top:732px;width:87px;height:23px;background:#fff;border:1px solid #a9a9a9;box-sizing:border-box;"></div>
<span class="t" style="top:715.08px;font-size:11.3px;color:#444;letter-spacing:-0.207px;left:432.00px;">Sortierung Blättern</span>
<div class="abs" style="left:432px;top:733px;width:145px;height:22px;background:#dedede;"></div>
<svg class="abs" style="left:560px;top:741px" width="13" height="9" viewBox="0 0 13 9"><path d="M1 1.2 L6.5 7 L12 1.2" fill="none" stroke="#606060" stroke-width="1.85"/></svg>
<span class="t" style="top:734.84px;font-size:12px;color:#222;letter-spacing:-0.162px;left:435.00px;">Nr</span>
<div class="abs" style="left:582px;top:705px;width:80px;height:50px;background:#333335;border-radius:3px;"></div>
<div class="abs" style="left:664px;top:705px;width:115px;height:50px;background:#333335;border-radius:3px;"></div>
<div class="abs" style="left:781px;top:705px;width:130px;height:50px;background:#333335;border-radius:3px;"></div>
<div class="abs" style="left:913px;top:705px;width:120px;height:50px;background:#333335;border-radius:3px;"></div>
<svg class="abs" style="left:588px;top:717px" width="26" height="26" viewBox="0 0 26 26"><path d="M13.00 1.70 Q15.07 4.87 18.45 3.16 Q18.66 6.94 22.44 7.15 Q20.73 10.53 23.90 12.60 Q20.73 14.67 22.44 18.05 Q18.66 18.26 18.45 22.04 Q15.07 20.33 13.00 23.50 Q10.93 20.33 7.55 22.04 Q7.34 18.26 3.56 18.05 Q5.27 14.67 2.10 12.60 Q5.27 10.53 3.56 7.15 Q7.34 6.94 7.55 3.16 Q10.93 4.87 13.00 1.70 Z" fill="none" stroke="#fff" stroke-width="1.05" stroke-linejoin="miter"/><text x="13" y="14.9" font-size="6.4" font-weight="bold" font-style="italic" fill="#fff" text-anchor="middle" font-family="Liberation Sans, sans-serif" transform="rotate(-20 13 12.6)">NEW</text></svg>
<span class="t" style="top:721.78px;font-size:14.5px;color:#fff;letter-spacing:0.800px;left:622.30px;">Neu</span>
<svg class="abs" style="left:671px;top:716px" width="24" height="30" viewBox="0 0 24 30"><g fill="none" stroke="#fff" stroke-width="1.25"><rect x="1.6" y="6.6" width="16" height="21" rx="2"/><path d="M6.3 3.6 Q6.6 1.7 8.8 1.7 H20.6 Q22.6 1.7 22.6 3.7 V20.6 Q22.6 22.8 20 23"/></g></svg>
<span class="t" style="top:721.78px;font-size:14.5px;color:#fff;letter-spacing:0.565px;left:704.50px;">Kopieren</span>
<svg class="abs" style="left:788px;top:716px" width="24" height="30" viewBox="0 0 24 30"><g fill="none" stroke="#fff" stroke-width="1.25"><rect x="1.6" y="6.6" width="16" height="21" rx="2"/><path d="M6.3 3.6 Q6.6 1.7 8.8 1.7 H20.6 Q22.6 1.7 22.6 3.7 V20.6 Q22.6 22.8 20 23"/></g></svg>
<span class="t" style="top:713.04px;font-size:12px;color:#fff;letter-spacing:-0.141px;left:821.80px;">Kopieren auf</span>
<span class="t" style="top:729.04px;font-size:12px;color:#fff;letter-spacing:-0.134px;left:821.80px;">nächste freie Nr</span>
<svg class="abs" style="left:920px;top:718px" width="24" height="24" viewBox="0 0 24 24"><g fill="none" stroke="#fff" stroke-width="1.5" stroke-linejoin="round"><path d="M3.6 1.9 H18.4 L22.2 5.7 V20.2 Q22.2 22 20.4 22 H3.6 Q1.9 22 1.9 20.2 V3.6 Q1.9 1.9 3.6 1.9 Z"/><path d="M6.3 1.9 V6.6 Q6.3 7.6 7.3 7.6 H16.6 Q17.6 7.6 17.6 6.6 V1.9"/><path d="M14.2 2.4 V5.2"/><path d="M6.3 22 V14.2 Q6.3 13.2 7.3 13.2 H17 Q18 13.2 18 14.2 V22"/></g></svg>
<span class="t" style="top:721.78px;font-size:14.5px;color:#fff;letter-spacing:0.526px;left:953.00px;">Speichern</span>
</div></div></body></html>
